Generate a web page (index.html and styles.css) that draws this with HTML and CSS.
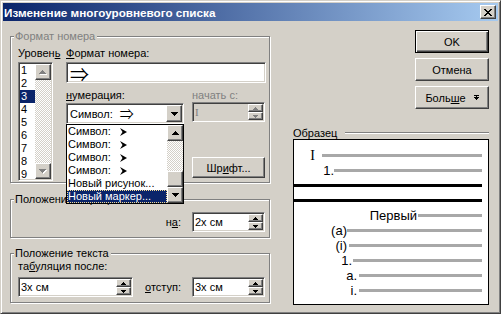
FILE: index.html
```html
<!DOCTYPE html>
<html lang="ru">
<head>
    <meta charset="UTF-8">
    <meta name="viewport" content="width=device-width, initial-scale=1.0">
    <title>Изменение многоуровневого списка</title>
    <link rel="stylesheet" href="styles.css">
</head>
<body>
<div class="window">
    <!-- Title bar -->
    <div class="titlebar">
        <span class="title">Изменение многоуровневого списка</span>
        <button type="button" class="btn close-btn">
            <svg width="8" height="7" viewBox="0 0 8 7"><path d="M0 0h2v1H0zM6 0h2v1H6zM1 1h2v1H1zM5 1h2v1H5zM2 2h4v1H2zM3 3h2v1H3zM2 4h4v1H2zM1 5h2v1H1zM5 5h2v1H5zM0 6h2v1H0zM6 6h2v1H6z"/></svg>
        </button>
    </div>

    <div class="main">
        <div class="left">
            <!-- Number format group -->
            <fieldset class="group">
                <legend class="off">Формат номера</legend>
                <div class="format-body">
                    <div class="levels">
                        <label class="lbl">Уровен<u>ь</u></label>
                        <div class="listbox sunken">
                            <ul class="items">
                                <li>1</li>
                                <li>2</li>
                                <li class="sel">3</li>
                                <li>4</li>
                                <li>5</li>
                                <li>6</li>
                                <li>7</li>
                                <li>8</li>
                                <li>9</li>
                            </ul>
                            <div class="vscroll">
                                <div class="btn sbtn">
                                    <svg width="8" height="5" viewBox="0 0 8 5"><path fill="#fff" d="M4 1h1v1h1v1h1v1h1v1H1V4h1V3h1V2h1z"/><path fill="#808080" d="M3 0h1v1h1v1h1v1h1v1H0V3h1V2h1V1h1z"/></svg>
                                </div>
                                <div class="track"></div>
                                <div class="btn sbtn">
                                    <svg width="8" height="5" viewBox="0 0 8 5"><path fill="#fff" d="M1 1h7v1H7v1H6v1H5v1H4V4H3V3H2V2H1z"/><path fill="#808080" d="M0 0h7v1H6v1H5v1H4v1H3V3H2V2H1V1H0z"/></svg>
                                </div>
                            </div>
                        </div>
                    </div>

                    <div class="format">
                        <label class="lbl"><u>Ф</u>ормат номера:</label>
                        <div class="edit sunken"><span class="big-arrow">⇒</span></div>

                        <div class="num-row">
                            <div class="num-col">
                                <label class="lbl"><u>н</u>умерация:</label>
                                <div class="combo-wrap">
                                    <div class="combo sunken">
                                        <span class="combo-text">Символ:&nbsp; <span class="mid-arrow">⇒</span></span>
                                        <div class="btn drop-btn">
                                            <svg width="7" height="4" viewBox="0 0 7 4"><path d="M0 0h7v1H6v1H5v1H4v1H3V3H2V2H1V1H0z"/></svg>
                                        </div>
                                    </div>
                                    <!-- open dropdown -->
                                    <div class="droplist">
                                        <ul class="items">
                                            <li>Символ: <svg class="ahead" width="7" height="8" viewBox="0 0 7 8"><path d="M0 0L7 4L0 8L2.5 4z"/></svg></li>
                                            <li>Символ: <svg class="ahead" width="7" height="8" viewBox="0 0 7 8"><path d="M0 0L7 4L0 8L2.5 4z"/></svg></li>
                                            <li>Символ: <svg class="ahead" width="7" height="8" viewBox="0 0 7 8"><path d="M0 0L7 4L0 8L2.5 4z"/></svg></li>
                                            <li>Символ: <svg class="ahead" width="7" height="8" viewBox="0 0 7 8"><path d="M0 0L7 4L0 8L2.5 4z"/></svg></li>
                                            <li>Новый рисунок...</li>
                                            <li class="sel">Новый маркер...</li>
                                        </ul>
                                        <div class="vscroll">
                                            <div class="btn sbtn">
                                                <svg width="7" height="4" viewBox="0 0 7 4"><path d="M3 0h1v1h1v1h1v1h1v1H0V3h1V2h1V1h1z"/></svg>
                                            </div>
                                            <div class="track"></div>
                                            <div class="btn sbtn"></div>
                                            <div class="btn sbtn">
                                                <svg width="7" height="4" viewBox="0 0 7 4"><path d="M0 0h7v1H6v1H5v1H4v1H3V3H2V2H1V1H0z"/></svg>
                                            </div>
                                        </div>
                                    </div>
                                </div>
                            </div>

                            <div class="start-col">
                                <label class="lbl off">начать с:</label>
                                <div class="spin sunken off">
                                    <span class="spin-text serif">I</span>
                                    <div class="spin-btns">
                                        <div class="btn"><svg width="5" height="3" viewBox="0 0 5 3"><path d="M2 0h1v1h1v1h1v1H0V2h1V1h1z"/></svg></div>
                                        <div class="btn"><svg width="5" height="3" viewBox="0 0 5 3"><path d="M0 0h5v1H4v1H3v1H2V2H1V1H0z"/></svg></div>
                                    </div>
                                </div>
                                <button type="button" class="btn font-btn">Шр<u>и</u>фт...</button>
                            </div>
                        </div>
                    </div>
                </div>
            </fieldset>

            <!-- Marker position -->
            <fieldset class="group marker-pos">
                <legend>Положение маркера</legend>
                <div class="marker-body">
                    <label>н<u>а</u>:</label>
                    <div class="spin sunken narrow">
                        <span class="spin-text">2х см</span>
                        <div class="spin-btns">
                            <div class="btn"><svg width="5" height="3" viewBox="0 0 5 3"><path d="M2 0h1v1h1v1h1v1H0V2h1V1h1z"/></svg></div>
                            <div class="btn"><svg width="5" height="3" viewBox="0 0 5 3"><path d="M0 0h5v1H4v1H3v1H2V2H1V1H0z"/></svg></div>
                        </div>
                    </div>
                </div>
            </fieldset>

            <!-- Text position -->
            <fieldset class="group text-pos">
                <legend>Положение текста</legend>
                <div class="text-body">
                    <label class="lbl">та<u>б</u>уляция после:</label>
                    <div class="text-row">
                        <div class="spin sunken wide">
                            <span class="spin-text">3х см</span>
                            <div class="spin-btns">
                                <div class="btn"><svg width="5" height="3" viewBox="0 0 5 3"><path d="M2 0h1v1h1v1h1v1H0V2h1V1h1z"/></svg></div>
                                <div class="btn"><svg width="5" height="3" viewBox="0 0 5 3"><path d="M0 0h5v1H4v1H3v1H2V2H1V1H0z"/></svg></div>
                            </div>
                        </div>
                        <label class="indent-lbl"><u>о</u>тступ:</label>
                        <div class="spin sunken narrow">
                            <span class="spin-text">3х см</span>
                            <div class="spin-btns">
                                <div class="btn"><svg width="5" height="3" viewBox="0 0 5 3"><path d="M2 0h1v1h1v1h1v1H0V2h1V1h1z"/></svg></div>
                                <div class="btn"><svg width="5" height="3" viewBox="0 0 5 3"><path d="M0 0h5v1H4v1H3v1H2V2H1V1H0z"/></svg></div>
                            </div>
                        </div>
                    </div>
                </div>
            </fieldset>
        </div>

        <div class="right">
            <div class="buttons">
                <button type="button" class="btn default">OK</button>
                <button type="button" class="btn">Отмена</button>
                <button type="button" class="btn">Боль<u>ш</u>е
                    <svg class="more-icon" width="5" height="5" viewBox="0 0 5 5"><path d="M0 0h5v1H0zM2 1h1v1H2zM0 2h5v1H4v1H3v1H2V4H1V3H0z"/></svg>
                </button>
            </div>

            <div class="sample-head">
                <span>Образец</span>
                <div class="hline"></div>
            </div>

            <!-- Preview of the list -->
            <div class="preview">
                <div class="pv-row l1"><span class="pv-num serif">I</span><div class="bar"></div></div>
                <div class="pv-row l2"><span class="pv-num">1.</span><div class="bar"></div></div>
                <div class="pv-sep first"></div>
                <div class="pv-sep second"></div>
                <div class="pv-row l3"><span class="pv-num">Первый</span><div class="bar"></div></div>
                <div class="pv-row l4"><span class="pv-num">(a)</span><div class="bar"></div></div>
                <div class="pv-row l5"><span class="pv-num">(i)</span><div class="bar"></div></div>
                <div class="pv-row l6"><span class="pv-num">1.</span><div class="bar"></div></div>
                <div class="pv-row l7"><span class="pv-num">a.</span><div class="bar"></div></div>
                <div class="pv-row l8"><span class="pv-num">i.</span><div class="bar"></div></div>
            </div>
        </div>
    </div>
</div>
</body>
</html>
```

FILE: styles.css
```css
* {
    box-sizing: border-box;
}

body {
    margin: 0;
    background: #d4d0c8;
    font-family: "Liberation Sans", Arial, sans-serif;
    font-size: 11px;
    color: #000;
}

svg {
    display: block;
}

/* Window frame */
.window {
    width: 501px;
    height: 314px;
    padding: 2px;
    background: #d4d0c8;
    border: 1px solid;
    border-color: #d4d0c8 #404040 #404040 #d4d0c8;
    box-shadow: inset 1px 1px #fff, inset -1px -1px #808080;
}

.titlebar {
    display: flex;
    align-items: center;
    justify-content: space-between;
    height: 18px;
    padding: 0 2px 0 1px;
    background: linear-gradient(to right, #0a246a, #a6caf0);
}

.title {
    color: #fff;
    font-weight: bold;
    font-size: 11.7px;
    white-space: nowrap;
}

/* Classic 3D pieces */
.btn {
    display: flex;
    align-items: center;
    justify-content: center;
    margin: 0;
    padding: 0;
    font: inherit;
    color: #000;
    background: #d4d0c8;
    border: 1px solid;
    border-color: #fff #404040 #404040 #fff;
    box-shadow: inset -1px -1px #808080;
}

.sunken {
    padding: 1px;
    background: #fff;
    border: 1px solid;
    border-color: #808080 #fff #fff #808080;
    box-shadow: inset 1px 1px #404040, inset -1px -1px #d4d0c8;
}

.close-btn {
    width: 16px;
    height: 14px;
}

.off {
    color: #808080;
}

.serif {
    font-family: "Liberation Serif", serif;
}

u {
    text-decoration: underline;
}

/* Layout */
.main {
    display: flex;
    padding: 9px 0 0 7px;
}

.left {
    width: 260px;
}

.right {
    width: 196px;
    margin-left: 23px;
}

/* Group boxes */
.group {
    width: 260px;
    min-width: 0;
    margin: 0;
    padding: 0;
    border: 1px solid #808080;
    box-shadow: inset 1px 1px #fff, 1px 1px #fff;
}

.group legend {
    margin-left: 3px;
    padding: 0 2px 0 1px;
    line-height: 13px;
    background: #d4d0c8;
}

.marker-pos {
    margin-top: 10px;
}

.text-pos {
    margin-top: 9px;
}

.lbl {
    display: block;
    height: 13px;
    line-height: 13px;
    white-space: nowrap;
}

.format-body {
    display: flex;
    padding: 4px 0 1px 7px;
}

.levels {
    width: 35px;
    margin-right: 13px;
}

.listbox {
    display: flex;
    height: 119px;
    margin-top: 2px;
}

.items {
    flex: 1;
    margin: 0;
    padding: 0;
    list-style: none;
    overflow: hidden;
}

.items li {
    display: flex;
    align-items: center;
    height: 13px;
    line-height: 13px;
    padding-left: 1px;
    white-space: nowrap;
}

.items .sel {
    background: #0a246a;
    color: #fff;
}

.vscroll {
    display: flex;
    flex-direction: column;
    width: 16px;
}

.sbtn {
    flex: none;
    width: 16px;
    height: 16px;
}

.track {
    flex: 1;
    background: repeating-conic-gradient(#fff 0 25%, #d4d0c8 0 50%) 0 0 / 2px 2px;
}

.format {
    width: 200px;
}

.edit {
    display: flex;
    align-items: center;
    height: 21px;
    margin-top: 2px;
}

.big-arrow {
    padding: 2px 0 0 2px;
    font-family: "Noto Sans CJK JP", "DejaVu Sans", sans-serif;
    font-size: 19px;
    line-height: 15px;
}

.num-row {
    display: flex;
    gap: 8px;
    margin-top: 6px;
}

.num-col {
    width: 118px;
}

.start-col {
    width: 73px;
}

.combo-wrap {
    position: relative;
    margin-top: 1px;
}

.combo {
    display: flex;
    height: 21px;
}

.combo-text {
    flex: 1;
    display: flex;
    align-items: center;
    padding-left: 2px;
    white-space: pre;
}

.mid-arrow {
    margin-left: 1px;
    font-family: "Noto Sans CJK JP", "DejaVu Sans", sans-serif;
    font-size: 14px;
    line-height: 15px;
}

.drop-btn {
    width: 16px;
    height: 17px;
}

.droplist {
    position: absolute;
    top: 100%;
    left: 0;
    z-index: 2;
    display: flex;
    width: 118px;
    height: 80px;
    border: 1px solid #000;
    background: #fff;
}

.droplist .sel {
    outline: 1px dotted #f5db95;
    outline-offset: -1px;
}

.ahead {
    margin-left: 9px;
}

/* Spin edits */
.spin {
    display: flex;
    height: 20px;
}

.spin.off {
    background: #d4d0c8;
}

.spin-text {
    flex: 1;
    line-height: 16px;
    padding-left: 1px;
    white-space: nowrap;
}

.spin-btns {
    display: flex;
    flex-direction: column;
    width: 15px;
}

.spin-btns .btn {
    height: 8px;
}

.spin.off svg {
    fill: #808080;
}

.narrow {
    width: 73px;
}

.wide {
    width: 115px;
}

.font-btn {
    width: 73px;
    height: 21px;
    margin-top: 35px;
}

.marker-body {
    display: flex;
    justify-content: flex-end;
    align-items: center;
    gap: 11px;
    padding: 6px 4px 5px 0;
}

.text-body {
    padding: 0 4px 5px 7px;
}

.text-row {
    display: flex;
    align-items: center;
    margin-top: 4px;
}

.indent-lbl {
    margin-left: 12px;
}

.text-row .narrow {
    margin-left: auto;
}

/* Right column */
.buttons {
    display: flex;
    flex-direction: column;
    align-items: flex-end;
    gap: 5px;
}

.buttons .btn {
    width: 74px;
    height: 23px;
}

.btn.default {
    border-color: #000;
    box-shadow: inset 1px 1px #fff, inset -1px -1px #404040, inset -2px -2px #808080;
}

.more-icon {
    margin-left: 8px;
}

.sample-head {
    display: flex;
    align-items: center;
    height: 13px;
    margin-top: 17px;
}

.hline {
    flex: 1;
    height: 2px;
    margin-left: 8px;
    border-top: 1px solid #808080;
    border-bottom: 1px solid #fff;
}

.preview {
    height: 166px;
    padding-top: 8px;
    border: 1px solid #000;
    background: #fff;
    font-size: 13px;
}

.pv-row {
    display: grid;
    grid-template-columns: var(--num) 1fr;
    column-gap: var(--gap);
    align-items: center;
    height: 15px;
    padding-right: 6px;
}

.pv-num {
    text-align: right;
    white-space: nowrap;
    line-height: 15px;
}

.pv-num.serif {
    font-size: 14px;
}

.bar {
    height: 3px;
    background: #a8a8a8;
}

.pv-sep {
    height: 3px;
    margin-right: 6px;
    background: #000;
}

.pv-sep.first {
    margin-top: 6px;
}

.pv-sep.second {
    margin-top: 12px;
}

.l1 { --num: 21px; --gap: 7px; }
.l2 { --num: 40px; --gap: 0px; }
.l3 { --num: 123px; --gap: 1px; margin-top: 6px; }
.l4 { --num: 53px; --gap: 0px; }
.l5 { --num: 53px; --gap: 2px; }
.l6 { --num: 58px; --gap: 1px; }
.l7 { --num: 63px; --gap: 2px; }
.l8 { --num: 63px; --gap: 2px; }
```
